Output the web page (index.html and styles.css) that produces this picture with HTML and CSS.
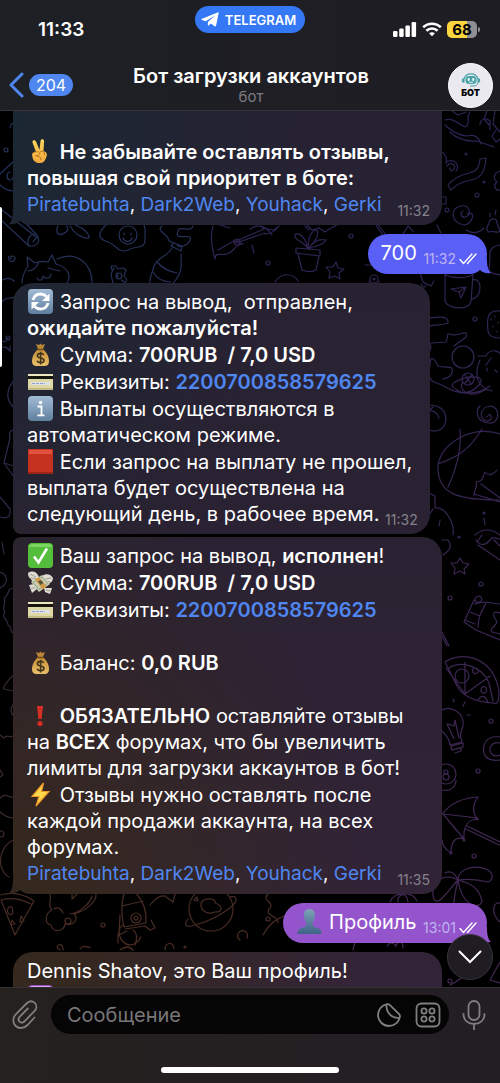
FILE: index.html
```html
<!DOCTYPE html>
<html lang="ru">
<head>
    <meta charset="UTF-8">
    <meta name="viewport" content="width=device-width, initial-scale=1.0">
    <title>Бот загрузки аккаунтов</title>
    <link rel="stylesheet" href="styles.css">
</head>
<body>

<!-- shared emoji and icons -->
<svg class="defs" width="0" height="0" aria-hidden="true">
    <defs>
        <linearGradient id="tile" x1="0" y1="0" x2="0" y2="1">
            <stop offset="0" stop-color="#a3bcd6"/>
            <stop offset="1" stop-color="#5f7f9f"/>
        </linearGradient>
        <linearGradient id="gold" x1="0" y1="0" x2="0" y2="1">
            <stop offset="0" stop-color="#c78d35"/>
            <stop offset="1" stop-color="#e8c069"/>
        </linearGradient>
        <linearGradient id="skin" x1="0" y1="0" x2="0" y2="1">
            <stop offset="0" stop-color="#ffd65c"/>
            <stop offset="1" stop-color="#f0a83c"/>
        </linearGradient>
        <linearGradient id="person" x1="0" y1="0" x2="0" y2="1">
            <stop offset="0" stop-color="#7da3b8"/>
            <stop offset="1" stop-color="#3f6488"/>
        </linearGradient>
        <symbol id="e-bag" viewBox="0 0 25 25">
            <path d="M8 2l3 1 1.500-1.500L14 3l3-1-2 5h-5z" fill="#b98638"/>
            <path d="M10 7h5c3 3 6 7 6 12 0 4-2 5-5 5H9c-3 0-5-1-5-5C4 14 7 10 10 7z" fill="url(#gold)"/>
            <path d="M9 7.500h7" stroke="#6b4a1a" stroke-width="1.500"/>
            <path d="M15.800 13c-.6-1.200-1.700-1.600-3.200-1.600-2 0-3.200.8-3.200 2.300 0 3.200 6.600 1.500 6.600 4.600 0 1.600-1.400 2.500-3.400 2.500-1.800 0-3-.7-3.500-2M12.600 9.800v12.600" fill="none" stroke="#40351f" stroke-width="1.600"/>
        </symbol>
        <symbol id="e-card" viewBox="0 0 25 25">
            <rect y="5" width="25" height="16" rx="1" fill="#ddd8a6"/>
            <path d="M0 5h25v2H0z" fill="#ebe7bd"/>
            <path d="M0 7h25v3H0z" fill="#17150f"/>
            <path d="M3 13h19v3H3z" fill="#dfe1e6"/>
            <path d="M4 14.500h13" stroke="#8f9fc8" stroke-dasharray="3 1"/>
            <path d="M0 19h25v2H0z" fill="#c2bb83"/>
        </symbol>
        <symbol id="i-ticks" viewBox="0 0 18 12">
            <path d="M1 6.500l3.500 4L13 1M8.500 10.500L17 1" fill="none" stroke="#fff" stroke-width="1.400" stroke-linecap="round" stroke-linejoin="round"/>
        </symbol>
        <symbol id="i-tail" viewBox="0 0 22 16">
            <path d="M4 0c0 7-.5 11.500-4 15 4 .8 8 0 11-3 3 2.500 6 4 11 4V0z"/>
        </symbol>
    </defs>
</svg>

<header class="header">
    <div class="status">
        <time class="clock">11:33</time>
        <a class="pill" href="#">
            <svg width="18" height="15" viewBox="0 0 18 15"><path d="M17.200.3L1 6.800c-.9.4-.8 1 0 1.300l3.800 1.200L14 3.400 6.900 10v3.700c.4 0 .7-.2 1-.5l1.900-1.800 3.900 2.900c.7.4 1.200.2 1.400-.7L17.700.9c.1-.5-.1-.8-.5-.6z" fill="#fff"/></svg>
            TELEGRAM
        </a>
        <div class="indicators">
            <svg width="24" height="15" viewBox="0 0 24 15" fill="#fff">
                <rect x="0" y="9" width="4.500" height="6" rx="1.200"/>
                <rect x="6.200" y="6.500" width="4.500" height="8.500" rx="1.200"/>
                <rect x="12.400" y="3.500" width="4.500" height="11.500" rx="1.200"/>
                <rect x="18.600" y="0" width="4.500" height="15" rx="1.200"/>
            </svg>
            <svg width="20" height="15" viewBox="0 0 20 15" fill="none" stroke="#fff" stroke-width="2.600">
                <path d="M1.200 5.300c5-4.700 12.600-4.700 17.600 0M4.400 8.700c3.200-3 8-3 11.200 0"/>
                <path d="M10 14.300l-2.900-3c1.700-1.500 4.100-1.500 5.800 0z" fill="#fff" stroke="none"/>
            </svg>
            <span class="battery">68</span>
        </div>
    </div>
    <nav class="bar">
        <a class="back" href="#" aria-label="Назад">
            <svg width="15" height="26" viewBox="0 0 15 26"><path d="M13 2L2 13l11 11" fill="none" stroke="#4f86f0" stroke-width="3" stroke-linecap="round" stroke-linejoin="round"/></svg>
            <span class="badge">204</span>
        </a>
        <div class="heading">
            <h1>Бот загрузки аккаунтов</h1>
            <p>бот</p>
        </div>
        <a class="avatar" href="#" aria-label="Профиль бота">
            <svg width="20" height="14" viewBox="0 0 20 14">
                <path d="M3 6C4 2 7 .8 10 .8S16 2 17 6" fill="none" stroke="#4aa3a8" stroke-width="1.200"/>
                <rect x="4.500" y="3" width="11" height="8" rx="3.500" fill="#4aa3a8"/>
                <rect x="6.700" y="5" width="2" height="3" rx="1" fill="#fff"/>
                <rect x="11.300" y="5" width="2" height="3" rx="1" fill="#fff"/>
                <path d="M8 9.300h4" stroke="#fff" stroke-width=".8"/>
                <path d="M3.500 5v5C1.500 10 .8 9 .8 7.500S1.500 5 3.500 5zM16.500 5v5c2 0 2.700-1 2.700-2.500S18.500 5 16.500 5z" fill="#4aa3a8"/>
                <path d="M17 10c-.6 2-2 3-5 3H9" fill="none" stroke="#4aa3a8"/>
            </svg>
            <span>БОТ</span>
        </a>
    </nav>
</header>

<main class="chat">
    <!-- wallpaper -->
    <svg class="wallpaper" viewBox="0 111 500 876" preserveAspectRatio="xMidYMin slice" aria-hidden="true">
        <defs>
            <linearGradient id="ink" gradientUnits="userSpaceOnUse" x1="0" y1="150" x2="0" y2="960">
                <stop offset="0" stop-color="#23345f"/>
                <stop offset=".45" stop-color="#2b2946"/>
                <stop offset=".75" stop-color="#3b2a30"/>
                <stop offset="1" stop-color="#4b2c20"/>
            </linearGradient>
            <linearGradient id="ink2" gradientUnits="userSpaceOnUse" x1="0" y1="150" x2="0" y2="960">
                <stop offset="0" stop-color="#2c2353"/>
                <stop offset="1" stop-color="#432853"/>
            </linearGradient>
        </defs>
        <g fill="none" stroke="url(#ink)" stroke-width="1.200" stroke-linejoin="round" stroke-linecap="round">
            <circle cx="6" cy="150" r="2"/>
            <path d="M14 161L0 174M0 185c4 4 9 6 14 6M10 172a3 4 0 1 0 3 5M10 128q1-5 4-5"/>
            <!-- pencil -->
            <path d="M2 210l34 27M0 219l29 27M13 210l23 24M29 246c-3-7 1-12 7-12 4 4 4 10-3 12zM33 242q2-4 5-5"/>
            <!-- leaves -->
            <path d="M58 226c-3 6 0 12 8 6 4-3 0-8-1-8M70 226c4 7 12 13 19 12 0-7-9-11-16-14"/>
            <!-- egg -->
            <path d="M106 225c-9 8-8 14 2 17 9 3 10 12 20 8 9-5 17 0 17-11 0-7 1-10-1-14"/>
            <circle cx="128" cy="235" r="9"/><path d="M124 235v-2M131 235v-2M123 238c2 5 8 4 9 0"/>
            <!-- bottle -->
            <path d="M172 248c-5 9-13 8-18 18-2 8-5 11-4 19M181 254c0 12 2 17-6 27l-3 4M171 246l10 5 1-5-8-3zM157 262q8 9 20 11M153 272q6 10 18 10M162 226c-6 4 4 8 6 12 0 6 8 3 10 8 4 2 14-3 12-9-6-2-16 3-12-6 0-6 14 2 15-5"/>
            <!-- sleeping cat -->
            <path d="M22 283c0-8 4-14 6-17l-1-9 8 6c4-2 8-2 13-1l4-7 4 9c8 2 12 6 13 12 0 6-3 9-6 9M57 259c20-9 35 5 35 24M28 271q7 0 11-9M60 271l-12-3M37 278c2 4 6 2 6-2 2 3 8 3 8-2"/>
            <path d="M0 281c6-3 10-4 14 0M11 259c-2-4 4-4 4 0-2 5-8 2-6-3"/>
            <!-- snack -->
            <path d="M114 268l-3 6 2 10M112 270l-1-4 5 0 2 3 5-1 3 2-2 6 3 4-3 4M117 273l1 5M122 280l2 2"/>
            <circle cx="119" cy="276" r="3"/>
            <path d="M2 302c4-6 10-3 12-5M8 338l-3 4-5-2 2 5-2 3 6-1 4 4v-5M14 380c-8 10-8 20 0 28M14 430q-6 0-4 8l-6 25 10 14M4 463l10 3M0 497l10 12c1 8-2 10-10 8M2 542l2 12M0 572c9 3 8 12 0 16M14 588c-8 0-4 8-10 10 3 6-3 9 1 14-4 6 3 7 3 13 4 2 2 8 6 8M14 675c-6 4-12 14-10 14l10 2M14 703q-6 8 0 13M0 735l4 3c4-5 7 2 10-3M0 770l3 5-3 2M0 798c6-6 9 0 13-1M0 812c4 4 8 6 14 6M14 840c-16 6-18 30-5 37"/>
            <circle cx="8" cy="338" r="2"/><circle cx="1" cy="834" r="3"/>
            <!-- pizza slice -->
            <path d="M0 895q18-5 34 6l-19 34-14-35q14-4 30 4M12 907a3 4 0 1 0 1 6zM21 916l3 5-4 1zM12 920l3 4-4 1z"/>
            <!-- broccoli -->
            <path d="M50 894c2 7-3 11 2 16-7 3-8 14-1 15 1 8 13 7 14-1 9 2 14-5 9-10 11-3 23-12 22-20M54 909c4-3 7 0 9 4M72 893v6l6-6M70 914c9-1 20-10 22-18"/>
            <circle cx="103" cy="925" r="2"/>
            <!-- rocket -->
            <path d="M124 893c-3 12-3 22 0 34l22-4c1-12-3-22-10-30M122 906l21-5M125 929l20-3 5 4 5-2-4-8M120 915l-1 20 8-4M118 943c-1-10 2-18 6-18M133 930q6 4 2 15M150 905q8-10 15-9l8 6 2-8"/>
            <circle cx="136" cy="918" r="5"/><circle cx="136" cy="918" r="2"/>
            <!-- planet -->
            <circle cx="211" cy="909" r="22"/>
            <path d="M188 919c-6 8 0 9 10 5 16-4 38-18 38-24 0-4-3-4-6-3M201 903c4-7 16-4 14 0 8 3 8 9 0 9-6 3-15 0-14-9zM194 900l3-3 1 4z"/>
            <path d="M240 940a5 5 0 1 1 7-2M119 934c4 14 16 14 22 3M60 950c-8-5 4-9 3 0M80 949c4-6 8 0 10-2M120 950q8-6 13 0M165 950c0-8 8-9 9-1M268 894c-7 7 8 8 1 15-4 8 10 6 9 14M263 935q12-22 35-20"/>
            <circle cx="68" cy="921" r="3"/><circle cx="268" cy="919" r="2"/><circle cx="185" cy="947" r="1"/>
        </g>
        <g fill="none" stroke="url(#ink2)" stroke-width="1.200" stroke-linejoin="round" stroke-linecap="round">
            <!-- guitar -->
            <path d="M213 226c-3 10-2 20 2 33 0-8 7-3 12-5 7-2 8-10 16-10M220 225l10 3M243 244l-9-3-16 9M236 241l28-12M236 243l29-10M262 228l12 2 5-4M265 234q8 0 14-8"/>
            <circle cx="237" cy="242" r="3"/><path d="M252 245l2 8M250 229c10-7 18 0 22 6"/>
            <!-- flower pot -->
            <path d="M296 248l24 2v6l-24-3zM298 254l4 16c5 2 10 2 14 0l3-14M308 249c-4-9-14-7-13-15 8-1 11 7 13 15 0-11 3-19 9-19 3 6-3 12-9 19 7-4 14-2 18-9-8-2-14 3-18 9M307 225l5 5 7-2 6 4 6-4 6-3M309 230l-4-4"/>
            <circle cx="351" cy="236" r="2"/><circle cx="268" cy="263" r="2"/>
            <path d="M336 262l2 6 6 1-5 4 1 6-5-3-6 2 1-6-4-5 7 0zM275 282c6-10 18-9 23-1M376 225l8 12M378 225l8 10M400 239l8-13 5 5M365 265h8M420 273l3 9 8 4 3-5"/>
            <circle cx="374" cy="279" r="4"/><circle cx="374" cy="279" r="1"/>
            <path d="M369 281c0 6 10 6 10 0"/>
            <!-- bird and twig -->
            <path d="M445 120c10-4 18 10 22 6 3-6-1-9 3-14M445 125q10 10 22 11c7-2 12 1 14 8M452 111l6 4 8-3M487 111l-3 8 6 7M480 125c0-6 6-8 10-4v9M495 111l-2 13 7 8M496 130l-4 6 4 6 4-3M450 132q10 10 27 9l17 6"/>
            <path d="M442 152q6 4 4 12M447 166c3-5 10-1 7 3-2 4-5 1-4-1M446 162c10-5 14 5 10 9"/>
            <path d="M480 159c-1 9-3 12-11 14-9 2-17 7-21 12l3 5c6-6 12-9 20-10 10-2 14-8 15-22zM500 171c-7 2-7 8-3 11-5 4-1 9 3 8"/>
            <circle cx="466" cy="154" r="1"/><circle cx="484" cy="182" r="1"/><circle cx="477" cy="195" r="2"/><circle cx="447" cy="210" r="2"/>
            <path d="M467 214c10-4 5 11-3 11-14-2-14-18-3-19 10-2 10 10 5 11-6 1-6-5-3-6M442 197h4v7h-4M489 223c1-6 8-5 8 0l3 8c-2 3-7-1-11 1-5-2 0-8 0-9M490 213v4M496 210l-1 5M500 245q-12 2-10 12l-1 14c5 4 8 3 11 4M437 225l4 8M466 230q10 6 18-2"/>
            <!-- mug -->
            <path d="M445 275v26c2 8 22 10 26 1l2-28c-9-5-24-3-28 1 10 4 20 3 28 0M473 280c9-3 10 17-1 19M451 289l15-2-5 11-2-6zM451 289l8 3 7-5M421 284q3 6 5 1"/>
            <circle cx="475" cy="319" r="2"/>
            <path d="M500 311c-14-2-13 10-12 20 1 6 7 7 12 7M491 319v1M495 316v1M493 326v1M498 322v1M497 331v1"/>
            <!-- cat with yarn -->
            <path d="M421 333c8-12 15-5 27-10 1-8-12-6-19-5-10 3-16 13-8 18 5 2 9 4 10 12-7 13-5 25 1 33l12 5c15 10 33 9 46 0M431 343l15-1c3-7 0-9 4-8 8 4 19-7 16 3l-12 9M430 366c0-12 4-8 8 0 8 3 16-2 14 6 0 6-7 6-9 7M480 360c-7 16-2 28 12 31M478 356h8c4-9 18-5 15 3M462 383c-2 6 2 10 8 11 9 2 16-7 18-4M457 390c-12-6 2-10 8-12s22-2 14 7-18 9-22 5z"/>
            <circle cx="463" cy="357" r="11"/><circle cx="468" cy="379" r="6"/>
            <path d="M465 375l6 9M472 375l-7 8M487 368v3M495 370l2 2M486 365l5-7"/>
            <!-- fruit, swirl -->
            <path d="M421 410c8-9 25-5 25 10-2 14-14 12-25 8M425 404l3 7 5-4M422 410q15-1 17 8M487 417c4-7 7 4 0 4-9-1-7-14 3-15 12 1 9 19-1 17-14-1-13-13-9-17"/>
            <circle cx="425" cy="462" r="2"/>
            <!-- ball -->
            <path d="M500 434c-27-10-62 10-62 34 0 27 22 32 62 32M460 429c2 22-4 41-12 58M438 464c17-6 31-13 44-35M474 496c0-9 4-7 2-14 8-1 6-4 9-10 4 5 9 2 12-2M474 494l26 8M481 484l19 14M421 489l14 7v12c10-2 20 15 18 27M433 509l-4 6M440 520l-1 6M484 518l1 7M475 535q12-10 25 0"/>
            <circle cx="484" cy="513" r="1"/>
            <path d="M442 540l6 0c6 8-1 12-5 15M460 558l3 5 6 1-5 5 1 5-5-3-6 3 1-6-4-5 6 0zM476 540c4 6 9 6 14 0 4-4 4-2 10-1M478 545l22 15M482 535l-5 7M494 540l6 6"/>
            <circle cx="459" cy="537" r="1"/><circle cx="481" cy="584" r="2"/><circle cx="450" cy="598" r="2"/>
            <!-- candy pack -->
            <path d="M474 600l-10 22 12 8 24 10M474 604l10-2 16 2M486 603c-4 8-8 13-8 24M470 612l10 4M465 620l10 4M475 600c0-4 6-6 7 0-2 3-7 3-7 0M500 613c-7-3-8 2-4 7s-8 8-4 12l8 2M442 632l7 14M442 636l5 10"/>
            <!-- pizza -->
            <path d="M445 662c16-11 45-6 53 24 2 10 1 20-5 17-15-1-30-6-36-17zM449 668c12-8 33-2 40 15l4 18M465 662v32l25-18M446 668l19 26M473 669c2-3 6 0 5 3-2 3-7 1-5-3zM482 687c4-2 6 3 3 6-4 1-5-3-3-6zM478 700c4-6 8-4 10 3"/>
            <circle cx="462" cy="676" r="7"/>
            <!-- bulb -->
            <path d="M442 710c9-5 23 3 21 16-2 7-4 7-1 16l-12 3c0-6-6-12-8-14M447 724l7 15M448 724l6 2 1-6 4 18M451 746l12-3v4l-11 3zM453 750l8-2v3l-6 2M453 699l1 3M465 702l-2 4M467 715h3"/>
            <circle cx="491" cy="721" r="2"/><circle cx="478" cy="771" r="2"/>
            <path d="M500 737c-14-2-18 8-16 16 2 7 8 8 16 7M500 743c-8-2-12 5-9 10s9 2 9 2"/>
            <circle cx="446" cy="774" r="10"/><circle cx="446" cy="772" r="2"/><circle cx="446" cy="777" r="3"/>
            <!-- umbrella -->
            <path d="M442 814q13-16 36-17c-5 7-6 15-1 22-9 1-14 6-13 20-9-3-13 3-13 14q-9-6-9-13M443 814q17 2 35 4M443 814l21 25M467 826l33 16M466 829l33 16M442 790c8 2 14-3 14-10"/>
            <circle cx="477" cy="819" r="1"/><circle cx="464" cy="840" r="1"/><circle cx="451" cy="853" r="1"/><circle cx="474" cy="856" r="2"/>
            <!-- palm -->
            <path d="M458 880c0-12 18-16 30-10 6 4 5 10 0 12-12-3-22-3-30-2-8-5-18-4-23 5-4 8-2 20 5 15 8-7 12-14 18-20 12 3 22 8 24 22-4 8-20 4-24-22-3 14-5 20-4 28M445 873q8-4 13 7M500 903c-9-1-8 12 0 19M390 902c3-10 22-12 27-1M398 902c-2-7 9-12 10 0M387 946q4-6 9 0M396 946c2-6 7-5 7 2M355 942l-2 8M450 985c12-5 20-18 32-17 8-8 10-20 6-25M500 962l-10 18 10 3M477 968q8-1 9-10"/>
            <circle cx="450" cy="981" r="2"/>
        </g>
    </svg>

    <div class="messages">
        <article class="msg in cut wide">
            <p><svg class="emoji" width="25" height="25" viewBox="0 0 25 25" role="img" aria-label="✌"><path d="M8 13L4.500 3.500C4 1 7 .4 8 2.500L11.500 11l1-9c.3-2.500 3.800-2.200 3.600.2L15.500 12l2 1c2 1.500 1.500 4 .5 6-1 3-3 5-6 5-4 0-7-2-7.500-6-.8-3-.5-5 3.500-5z" fill="url(#skin)"/><path d="M5 14c3-2 6-1.500 7 0 0 2-2 2.500-4.500 2.500M12 13c3-2 5 0 4.500 3M8 17c3 0 5 1 5 4" fill="none" stroke="#b9771f"/></svg> <b>Не забывайте оставлять отзывы,<br>повышая свой приоритет в боте:</b></p>
            <p class="links"><span><a href="#">Piratebuhta</a>, <a href="#">Dark2Web</a>, <a href="#">Youhack</a>, <a href="#">Gerki</a></span> <time>11:32</time></p>
            <svg class="tail" width="22" height="16"><use href="#i-tail"/></svg>
        </article>

        <article class="msg out blue">
            <p>700 <time>11:32</time><svg class="ticks" width="18" height="12"><use href="#i-ticks"/></svg></p>
            <svg class="tail" width="22" height="16"><use href="#i-tail"/></svg>
        </article>

        <article class="msg in">
            <p><svg class="emoji" width="25" height="25" viewBox="0 0 25 25" role="img" aria-label="🔄"><rect width="25" height="25" rx="4" fill="url(#tile)"/><path d="M5 11c1-4 4-6 7.500-6 2.500 0 4.500 1 6 2.500M20 14c-1 4-4 6-7.500 6-2.500 0-4.500-1-6-2.500" fill="none" stroke="#fff" stroke-width="2.800"/><path d="M21.500 4.500v7.500h-7.500zM3.500 20.500V13H11z" fill="#fff"/></svg> Запрос на вывод,&nbsp; отправлен,<br><b>ожидайте пожалуйста!</b></p>
            <p><svg class="emoji" width="25" height="25" role="img" aria-label="💰"><use href="#e-bag"/></svg> Сумма: <b>700RUB&nbsp; / 7,0 USD</b></p>
            <p><svg class="emoji" width="25" height="25" role="img" aria-label="💳"><use href="#e-card"/></svg> Реквизиты: <a href="#"><b>2200700858579625</b></a></p>
            <p><svg class="emoji" width="25" height="25" viewBox="0 0 25 25" role="img" aria-label="ℹ"><rect width="25" height="25" rx="4" fill="url(#tile)"/><circle cx="12.500" cy="6.500" r="1.700" fill="#fff"/><path d="M9.500 10.500h4V19M9.500 19.300h7" fill="none" stroke="#fff" stroke-width="1.800"/></svg> Выплаты осуществляются в<br>автоматическом режиме.</p>
            <p><svg class="emoji" width="25" height="25" viewBox="0 0 25 25" role="img" aria-label="🟥"><rect width="25" height="25" rx="1" fill="#c5321f"/><path d="M1 1h23v4H1z" fill="#e0523f"/><path d="M0 23h25v2H0z" fill="#9f2418"/></svg> Если запрос на выплату не прошел,<br>выплата будет осуществлена на<br>следующий день, в рабочее время. <time>11:32</time></p>
        </article>

        <article class="msg in wide">
            <p><svg class="emoji" width="25" height="25" viewBox="0 0 25 25" role="img" aria-label="✅"><rect width="25" height="25" rx="4" fill="#55bd3c"/><path d="M1 4q0-3 4-3h15q4 0 4 3z" fill="#7bd561"/><path d="M6 13.500l4.500 6L19 5.500" fill="none" stroke="#fff" stroke-width="2.600"/></svg> Ваш запрос на вывод, <b>исполнен</b>!</p>
            <p><svg class="emoji" width="25" height="25" viewBox="0 0 25 25" role="img" aria-label="💸"><path d="M0 3c5-3 9-1 11 4l-1 5c-3 1-7-1-7-3-2-1-3-3-3-6zM25 8c-2-4-7-5-11-2l1 5 5 3c3-1 5-3 5-6zM1 15l5-1 3 5-5 4zM16 18l8 0-2 6-5-2z" fill="#dedbd0"/><path d="M2 4l6 3M3 8l5 1M23 8l-6 1M22 12l-5-1M3 18l4 0M18 20l4 1" stroke="#8f8b80" stroke-width=".8"/><path d="M3 12l11-7 8 9-11 8z" fill="#c9cdb2"/><path d="M5 12.500l9-5.500 5.500 6.500-8.500 6z" fill="none" stroke="#8c9877" stroke-width=".8"/><path d="M7 9.500l4-2.500 7.500 9.500-4 3z" fill="#d19b46"/><path d="M10 11.500l3-1.500 2.500 3-3 2z" fill="#57523a"/></svg> Сумма: <b>700RUB&nbsp; / 7,0 USD</b></p>
            <p><svg class="emoji" width="25" height="25" role="img" aria-label="💳"><use href="#e-card"/></svg> Реквизиты: <a href="#"><b>2200700858579625</b></a></p>
            <p class="blank"></p>
            <p><svg class="emoji" width="25" height="25" role="img" aria-label="💰"><use href="#e-bag"/></svg> Баланс: <b>0,0 RUB</b></p>
            <p class="blank"></p>
            <p><svg class="emoji" width="25" height="25" viewBox="0 0 25 25" role="img" aria-label="❗"><path d="M9 3h6l-1.400 13h-3.200z" fill="#d62e22"/><circle cx="12" cy="20.500" r="2.600" fill="#d62e22"/></svg> <b>ОБЯЗАТЕЛЬНО</b> оставляйте отзывы<br>на <b>ВСЕХ</b> форумах, что бы увеличить<br>лимиты для загрузки аккаунтов в бот!</p>
            <p><svg class="emoji" width="25" height="25" viewBox="0 0 25 25" role="img" aria-label="⚡"><path d="M15.500 1L4 14.500h7L8 24l13-14.500h-7.500z" fill="#ffd84c" stroke="#ef9a2a" stroke-width="1.200"/></svg> Отзывы нужно оставлять после<br>каждой продажи аккаунта, на всех<br>форумах.</p>
            <p class="links"><span><a href="#">Piratebuhta</a>, <a href="#">Dark2Web</a>, <a href="#">Youhack</a>, <a href="#">Gerki</a></span> <time>11:35</time></p>
            <svg class="tail" width="22" height="16"><use href="#i-tail"/></svg>
        </article>

        <article class="msg out purple">
            <p><svg class="emoji" width="25" height="25" viewBox="0 0 25 25" role="img" aria-label="👤"><path d="M12.500 0c4 0 6 3 5.600 7-.3 3-1.300 5-2.600 6.500 0 3 .5 4 3.500 5 4 1 5.500 3 5.500 6.500H.5C.5 21.500 2 19.500 6 18.500c3-1 3.500-2 3.500-5C8.200 12 7.200 10 6.900 7 6.500 3 8.500 0 12.500 0z" fill="url(#person)"/></svg> Профиль <time>13:01</time><svg class="ticks" width="18" height="12"><use href="#i-ticks"/></svg></p>
            <svg class="tail" width="22" height="16"><use href="#i-tail"/></svg>
        </article>

        <article class="msg in wide">
            <p>Dennis Shatov, это Ваш профиль!</p>
            <p><svg class="emoji" width="25" height="25" viewBox="0 0 25 25" role="img" aria-label="🆔"><rect width="25" height="25" rx="4" fill="#9a50c0"/><rect x="2" y="1" width="21" height="4" rx="2" fill="#d9a5ee"/></svg></p>
        </article>
    </div>

    <div class="edge"></div>
    <button class="scroll-down" type="button" aria-label="Вниз">
        <svg width="24" height="14" viewBox="0 0 24 14"><path d="M1.500 1.500L12 12 22.500 1.500" fill="none" stroke="#fff" stroke-width="2" stroke-linecap="round"/></svg>
    </button>
</main>

<footer class="footer">
    <form class="composer">
        <button type="button" aria-label="Прикрепить">
            <svg width="26" height="30" viewBox="0 0 26 30"><path d="M22.500 17.500l-7 7.500c-4 4-9 3.700-11.800 1C.6 23 .3 18 4 14L14.500 3.500c2.700-2.700 6-2.500 8.200-.6 2.200 2.200 2.300 5.600-.3 8.300L12.500 21.300c-1.800 1.800-3.800 1.600-5 .4-1.300-1.300-1.300-3.200.3-5l8-8.200" fill="none" stroke="#817e7f" stroke-width="1.800" stroke-linecap="round"/></svg>
        </button>
        <div class="field">
            <input type="text" placeholder="Сообщение" aria-label="Сообщение">
            <button type="button" aria-label="Стикеры">
                <svg width="24" height="24" viewBox="0 0 24 24" fill="none" stroke="#817e7f" stroke-width="1.800"><path d="M10 1.200C4.500 2.200 1 6.800 1 12c0 6 5 11 11 11 5.500 0 10-4 10.900-9.200.2-1.200 0-1.800-.8-2.700L12.700 1.900c-.8-.8-1.500-.9-2.700-.7z"/><path d="M9.500 1.500c-.6 8 5 14 13 13.500" /></svg>
            </button>
            <button type="button" aria-label="Клавиатура бота">
                <svg width="26" height="26" viewBox="0 0 26 26" fill="none" stroke="#817e7f" stroke-width="1.800"><rect x="1.500" y="1.500" width="23" height="23" rx="5"/><circle cx="9" cy="9" r="2.600"/><circle cx="17" cy="9" r="2.600"/><circle cx="9" cy="17" r="2.600"/><circle cx="17" cy="17" r="2.600"/></svg>
            </button>
        </div>
        <button type="button" aria-label="Голосовое сообщение">
            <svg width="24" height="30" viewBox="0 0 24 30" fill="none" stroke="#817e7f" stroke-width="1.800" stroke-linecap="round"><rect x="6.500" y="1" width="11" height="19" rx="5.500"/><path d="M1.500 14c0 6.500 4.500 10 10.500 10s10.500-3.500 10.500-10M12 24v5.500"/></svg>
        </button>
    </form>
    <div class="home"></div>
</footer>

</body>
</html>
```
FILE: styles.css
```css
* {
    box-sizing: border-box;
}

body {
    display: flex;
    flex-direction: column;
    height: 100vh;
    margin: 0;
    background-color: #000000;
    color: #ffffff;
    font-family: Inter, "Liberation Sans", sans-serif;
    font-size: 20px;
}

h1, p {
    margin: 0;
}

a {
    color: #4f86f0;
    text-decoration: none;
}

b {
    font-weight: 600;
}

button {
    display: flex;
    flex: none;
    padding: 0;
    border: 0;
    background: none;
    cursor: pointer;
}

.defs {
    position: absolute;
}

/* header */
.header {
    flex: none;
    border-bottom: 1px solid #35343a;
    background: linear-gradient(90deg, #1d2025, #1f1d24);
}

.status {
    display: grid;
    grid-template-columns: 1fr auto 1fr;
    height: 60px;
    padding: 6px 20px 0;
}

.clock {
    padding: 12px 0 0 18px;
    font-size: 19px;
    font-weight: 600;
    line-height: 24px;
}

.pill {
    display: flex;
    align-items: center;
    gap: 6px;
    height: 27px;
    padding: 0 9px 0 6px;
    border-radius: 14px;
    background-color: #3478f6;
    color: #ffffff;
    font-size: 13px;
    font-weight: 600;
}

.indicators {
    display: flex;
    align-items: center;
    justify-content: flex-end;
    gap: 5px;
    height: 17px;
    margin-top: 15px;
}

.battery {
    position: relative;
    width: 30px;
    height: 17px;
    margin-right: 3px;
    border-radius: 5px;
    background: linear-gradient(90deg, #fcd53f 68%, #8f8e93 68%);
    color: #000000;
    font-size: 15px;
    font-weight: 700;
    line-height: 17px;
    text-align: center;
}

.battery::after {
    content: "";
    position: absolute;
    top: 6px;
    right: -3px;
    width: 2px;
    height: 5px;
    border-radius: 0 2px 2px 0;
    background-color: #8f8e93;
}

.bar {
    display: grid;
    grid-template-columns: 1fr auto 1fr;
    align-items: center;
    height: 50px;
    padding: 0 7px 0 9px;
}

.back {
    display: flex;
    align-items: center;
    gap: 5px;
}

.badge {
    padding: 0 7px;
    border-radius: 11px;
    background-color: #4f86f0;
    color: #ffffff;
    font-size: 16px;
    line-height: 22px;
}

.heading {
    text-align: center;
}

.heading h1 {
    font-size: 20px;
    font-weight: 600;
    line-height: 24px;
}

.heading p {
    color: #7d7c82;
    font-size: 15px;
    line-height: 18px;
}

.avatar {
    display: flex;
    flex-direction: column;
    align-items: center;
    justify-content: center;
    justify-self: end;
    width: 45px;
    height: 45px;
    border: 1px solid #ffffff;
    border-radius: 50%;
    background-color: #e9e9ef;
    color: #000000;
    font-size: 9px;
    font-weight: 900;
    line-height: 11px;
}

/* chat */
.chat {
    position: relative;
    flex: 1;
    min-height: 0;
    overflow: hidden;
}

.wallpaper {
    position: absolute;
    top: 0;
    left: 0;
    width: 100%;
    height: 100%;
}

.messages {
    position: relative;
    z-index: 0;
    display: flex;
    flex-direction: column;
    gap: 9px;
    padding: 0 13px;
}

.msg {
    position: relative;
    display: flex;
    flex-direction: column;
    gap: 1px;
    width: fit-content;
    border-radius: 20px;
    line-height: 26px;
    white-space: nowrap;
}

.in {
    padding: 6px 12px 7px 14px;
    background-image:
        radial-gradient(ellipse 75% 42% at 0% 86%, #35281f 20%, transparent),
        radial-gradient(ellipse 60% 50% at 0% 8%, #1b2834, transparent),
        linear-gradient(#252234, #2a2232 50%, #36243a);
    background-attachment: fixed;
}

.in + .in {
    margin-top: -6px;
    border-top-left-radius: 8px;
}

.in:has(+ .in) {
    border-bottom-left-radius: 8px;
}

.cut {
    padding-top: 28px;
    border-top-left-radius: 0;
    border-top-right-radius: 0;
}

.wide {
    width: 100%;
    max-width: 429px;
}

.blank {
    min-height: 25px;
}

.links {
    display: flex;
    justify-content: space-between;
    font-size: 19px;
}

.out {
    align-self: flex-end;
    padding: 6px 10px 8px 13px;
}

.blue {
    background-color: #5a5ff5;
}

.purple {
    background-color: #9455cc;
}

.emoji {
    margin: 0 1px;
    vertical-align: -5px;
}

.msg time {
    color: #85818c;
    font-size: 14px;
    line-height: 14px;
    vertical-align: -4px;
}

.links time {
    align-self: flex-end;
}

.out time {
    margin-left: 1px;
    color: #c0b4f2;
}

.ticks {
    margin-left: 3px;
    vertical-align: -5px;
}

.tail {
    position: absolute;
    bottom: 0;
    left: -4px;
    z-index: -1;
    fill: #33271f;
}

.cut .tail {
    fill: #1f2531;
}

.out .tail {
    right: -4px;
    left: auto;
    transform: scaleX(-1);
}

.blue .tail {
    fill: #5a5ff5;
}

.purple .tail {
    fill: #9455cc;
}

.edge {
    position: absolute;
    top: 96px;
    left: 0;
    width: 2px;
    height: 160px;
    border-radius: 0 2px 2px 0;
    background-color: #ffffff;
}

.scroll-down {
    position: absolute;
    right: 7px;
    bottom: 7px;
    align-items: center;
    justify-content: center;
    width: 46px;
    height: 46px;
    border: 1px solid #37343b;
    border-radius: 50%;
    background-color: #1f1c22;
}

/* footer */
.footer {
    flex: none;
    border-top: 1px solid #343133;
    background: linear-gradient(90deg, #25211f, #221e24);
}

.composer {
    display: flex;
    align-items: center;
    gap: 13px;
    padding: 7px 14px 0 12px;
}

.field {
    display: flex;
    flex: 1;
    align-items: center;
    gap: 14px;
    min-width: 0;
    height: 39px;
    padding: 0 8px 0 16px;
    border-radius: 20px;
    background-color: #050505;
}

.field input {
    flex: 1;
    width: 100%;
    min-width: 0;
    padding: 0;
    border: 0;
    outline: 0;
    background: none;
    color: #ffffff;
    font: inherit;
}

.field input::placeholder {
    color: #79777a;
}

.home {
    width: 178px;
    height: 6px;
    margin: 33px auto 10px;
    border-radius: 3px;
    background-color: #ffffff;
}
```
